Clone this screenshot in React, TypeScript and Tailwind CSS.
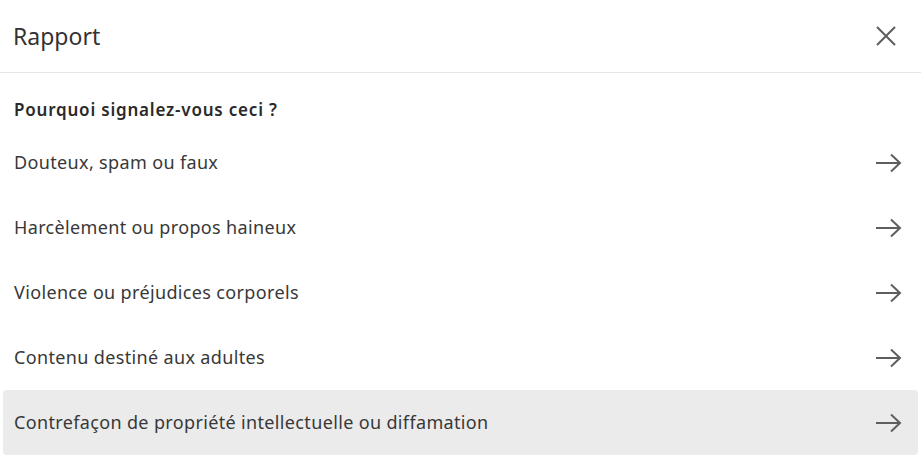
const reasons = [
  "Douteux, spam ou faux",
  "Harcèlement ou propos haineux",
  "Violence ou préjudices corporels",
  "Contenu destiné aux adultes",
  "Contrefaçon de propriété intellectuelle ou diffamation",
];

function ArrowIcon() {
  return (
    <svg width="28" height="20" viewBox="0 0 28 20" fill="none" stroke="#5e5e5e" strokeWidth="2">
      <path d="M2 10h24" />
      <path d="M17 1.5l9 8.5-9 8.5" />
    </svg>
  );
}

export default function App() {
  return (
    <div
      className="w-[921px] h-[467px] bg-white text-[#383838] overflow-hidden"
      style={{ fontFamily: '"Noto Sans", "Open Sans", sans-serif' }}
    >
      <div className="h-[73px] flex items-center justify-between pl-[13px] pr-[24px] border-b border-[#e6e6e6]">
        <h1 className="text-[23px] font-normal text-[#333]">Rapport</h1>
        <button className="w-[22px] h-[22px] flex items-center justify-center">
          <svg width="22" height="22" viewBox="0 0 22 22" stroke="#5e5e5e" strokeWidth="2">
            <path d="M2 2l18 18M20 2L2 20" />
          </svg>
        </button>
      </div>
      <div className="px-[3px]">
        <p className="h-[57px] flex items-center pt-[16px] px-[11px] text-[17px] tracking-[0.8px] font-semibold text-[#2a2a2a]">
          Pourquoi signalez-vous ceci ?
        </p>
        <ul>
          {reasons.map((r, i) => (
            <li
              key={r}
              className={`h-[65px] flex items-center justify-between pl-[11px] pr-[16px] rounded-[4px] ${
                i === reasons.length - 1 ? "bg-[#ebebeb]" : ""
              }`}
            >
              <span className="text-[18px] tracking-[0.35px]">{r}</span>
              <ArrowIcon />
            </li>
          ))}
        </ul>
      </div>
    </div>
  );
}
